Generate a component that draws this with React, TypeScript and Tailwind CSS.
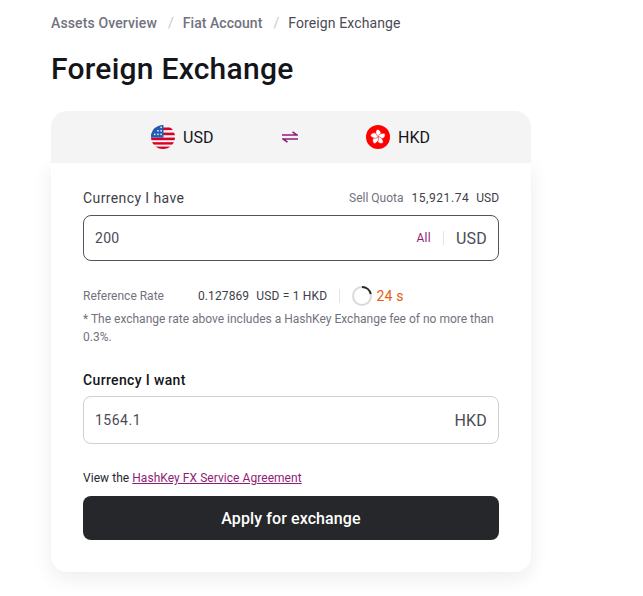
import React from 'react';

const UsFlag = () => (
  <svg width="24" height="24" viewBox="0 0 24 24" className="shrink-0">
    <defs>
      <clipPath id="usClip">
        <circle cx="12" cy="12" r="12" />
      </clipPath>
    </defs>
    <g clipPath="url(#usClip)">
      <rect width="24" height="24" fill="#f4f4f4" />
      <rect y="2.5" width="24" height="2.6" fill="#d80027" />
      <rect y="7.6" width="24" height="2.6" fill="#d80027" />
      <rect y="12.6" width="24" height="2.6" fill="#d80027" />
      <rect y="17.2" width="24" height="2.400" fill="#d80027" />
      <rect y="21.6" width="24" height="2.400" fill="#d80027" />
      <rect width="12.5" height="12.6" fill="#1f5cb4" />
      <g fill="#f4f4f4">
        <rect x="3" y="8.6" width="1.500" height="1.500" />
        <rect x="6.2" y="8.6" width="1.500" height="1.500" />
        <rect x="9.4" y="8.6" width="1.500" height="1.500" />
        <rect x="6.2" y="5" width="1.500" height="1.500" />
        <rect x="9.4" y="5" width="1.500" height="1.500" />
        <rect x="9.4" y="1.6" width="1.500" height="1.500" />
      </g>
    </g>
  </svg>
);

const petal = 'M12 12.300C9.800 11 8.800 7.900 10.900 4.400 13.300 4.300 15.200 6.200 14.900 8.300 14.700 9.900 12.900 10.500 12 12.300z';

const HkFlag = () => (
  <svg width="24" height="24" viewBox="0 0 24 24" className="shrink-0">
    <circle cx="12" cy="12" r="12" fill="#ff0000" />
    <g fill="#ffffff" stroke="#ff0000" strokeWidth="0.5">
      <path d={petal} />
      <path d={petal} transform="rotate(72 12 12)" />
      <path d={petal} transform="rotate(144 12 12)" />
      <path d={petal} transform="rotate(216 12 12)" />
      <path d={petal} transform="rotate(288 12 12)" />
    </g>
  </svg>
);

const SwapIcon = () => (
  <svg width="16" height="12" viewBox="0 0 16 12" fill="none" stroke="#8f1d78" strokeWidth="1.600" className="shrink-0">
    <path d="M0 4h15L10.500 0.800" />
    <path d="M16 8H1l4.500 3.200" />
  </svg>
);

const Spinner = () => (
  <svg width="20" height="20" viewBox="0 0 20 20" fill="none" strokeWidth="2" className="shrink-0">
    <circle cx="10" cy="10" r="9" stroke="#d9d9dc" />
    <path d="M10 1a9 9 0 0 1 8.800 7" stroke="#26272b" />
  </svg>
);

export default function App() {
  return (
    <div className="min-h-screen bg-white pl-[51px] pt-[15px] font-['Roboto',sans-serif]">
      <nav className="flex items-center text-[14px] leading-[17px] text-[#72727e]">
        <span className="font-medium tracking-[0.13px]">Assets Overview</span>
        <span className="ml-[11px] mr-[9px] text-[#c9c9cf]">/</span>
        <span className="font-medium tracking-[0.05px]">Fiat Account</span>
        <span className="ml-[11px] mr-[9px] text-[#c9c9cf]">/</span>
        <span className="tracking-[0.12px] text-[#4b4b55]">Foreign Exchange</span>
      </nav>

      <h1 className="mt-[13px] text-[30px] leading-[48px] font-medium tracking-[0.25px] text-[#14151a]">Foreign Exchange</h1>

      <div className="mt-[18px] w-[480px]">
        <div className="relative z-10 flex h-[52px] items-center rounded-t-[16px] bg-[#f4f4f5] pl-[100px]">
          <UsFlag />
          <span className="ml-[8px] w-[99px] pt-[2px] text-[16px] text-[#14151a]">USD</span>
          <SwapIcon />
          <div className="ml-[68px]">
            <HkFlag />
          </div>
          <span className="ml-[8px] pt-[2px] text-[16px] text-[#14151a]">HKD</span>
        </div>

        <div className="rounded-b-[16px] bg-white px-[32px] pb-[32px] pt-[26px] shadow-[0_6px_20px_rgba(30,30,40,0.08)]">
          <div className="flex items-center justify-between">
            <span className="text-[14px] leading-[18px] tracking-[0.4px] text-[#3e3e48]">Currency I have</span>
            <div className="flex items-center text-[12px] leading-[18px]">
              <span className="mr-[8px] text-[#72727e]">Sell Quota</span>
              <span className="mr-[7px] tracking-[0.55px] text-[#3e3e48]">15,921.74</span>
              <span className="text-[#3e3e48]">USD</span>
            </div>
          </div>

          <div className="mt-[8px] flex h-[46px] items-center rounded-[8px] border border-[#53535e] pl-[11px] pr-[11px]">
            <span className="flex-1 pt-px text-[14px] tracking-[0.3px] text-[#4b4b55]">200</span>
            <span className="text-[12px] tracking-[0.3px] text-[#8f1d78]">All</span>
            <span className="mx-[12px] h-[14px] w-px bg-[#e3e3e6]" />
            <span className="pt-px text-[16px] tracking-[0.2px] text-[#4b4b55]">USD</span>
          </div>

          <div className="mt-[24px] flex items-center text-[12px] leading-[22px]">
            <span className="w-[115px] text-[#72727e]">Reference Rate</span>
            <span className="tracking-[0.1px] text-[#3e3e48]">0.127869</span>
            <span className="ml-[7px] tracking-[0.2px] text-[#3e3e48]">USD = 1 HKD</span>
            <span className="mx-[12px] h-[14px] w-px bg-[#e3e3e6]" />
            <Spinner />
            <span className="ml-[4px] text-[14px] tracking-[0.2px] text-[#e2620e]">24 s</span>
          </div>

          <p className="mt-[3px] text-[12px] leading-[18px] text-[#72727e]">
            * The exchange rate above includes a HashKey Exchange fee of no more than 0.3%.
          </p>

          <div className="mt-[25px] text-[14px] font-medium leading-[18px] tracking-[0.35px] text-[#14151a]">Currency I want</div>

          <div className="mt-[7px] flex h-[48px] items-center rounded-[8px] border border-[#cfcfd4] pl-[11px] pr-[11px]">
            <span className="flex-1 pt-px text-[14px] tracking-[0.5px] text-[#4b4b55]">1564.1</span>
            <span className="pt-px text-[16px] tracking-[0.2px] text-[#4b4b55]">HKD</span>
          </div>

          <div className="mt-[26px] text-[12px] leading-[16px] tracking-[0.05px] text-[#26272b]">
            View the <a className="text-[#8f1d78] underline">HashKey FX Service Agreement</a>
          </div>

          <button className="mt-[10px] h-[44px] w-full rounded-[8px] bg-[#26272b] pt-px text-[16px] font-medium tracking-[0.1px] text-white">
            Apply for exchange
          </button>
        </div>
      </div>
    </div>
  );
}
